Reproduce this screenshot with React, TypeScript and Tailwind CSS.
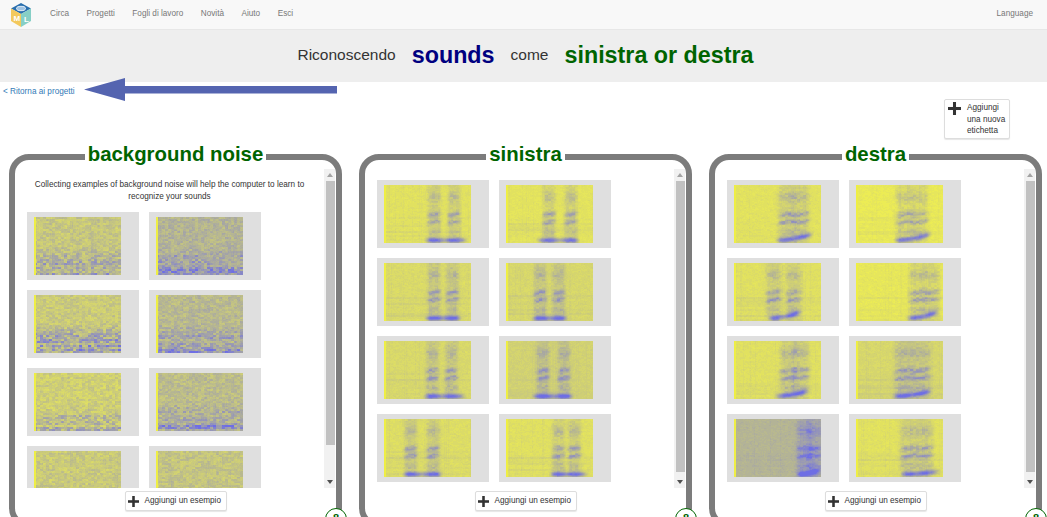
import { useMemo } from 'react';

interface Spec {
    seed: number;
    base: number;
    low?: number;
    cols?: [number, number];
    width?: number;
    start?: number;
    end?: number;
    rise?: number;
}

const noiseSpecs: Spec[] = [
    { seed: 3, base: 0.28, low: 0.34 },
    { seed: 7, base: 0.42, low: 0.34 },
    { seed: 11, base: 0.26, low: 0.5 },
    { seed: 17, base: 0.38, low: 0.38 },
    { seed: 23, base: 0.22, low: 0.3 },
    { seed: 29, base: 0.36, low: 0.48 },
    { seed: 31, base: 0.26, low: 0.05 },
    { seed: 37, base: 0.3, low: 0.05 },
];

const sinistraSpecs: Spec[] = [
    { seed: 41, base: 0.09, cols: [0.57, 0.8], start: 0.45, end: 0.97 },
    { seed: 43, base: 0.07, cols: [0.49, 0.74], start: 0.33, end: 0.85 },
    { seed: 47, base: 0.14, cols: [0.57, 0.78], start: 0.45, end: 0.9 },
    { seed: 53, base: 0.16, cols: [0.39, 0.6], start: 0.28, end: 0.72 },
    { seed: 59, base: 0.15, cols: [0.55, 0.77], start: 0.44, end: 0.95 },
    { seed: 61, base: 0.2, cols: [0.42, 0.66], start: 0.28, end: 0.78 },
    { seed: 67, base: 0.12, cols: [0.3, 0.56], start: 0.2, end: 0.68 },
    { seed: 71, base: 0.1, cols: [0.6, 0.78], start: 0.48, end: 0.95 },
];

const destraSpecs: Spec[] = [
    { seed: 73, base: 0.08, cols: [0.6, 0.76], width: 0.1, start: 0.46, end: 0.92, rise: 0.12 },
    { seed: 79, base: 0.02, cols: [0.55, 0.72], width: 0.1, start: 0.42, end: 0.88, rise: 0.12 },
    { seed: 83, base: 0.1, cols: [0.45, 0.68], width: 0.09, start: 0.38, end: 0.78, rise: 0.12 },
    { seed: 89, base: 0.04, cols: [0.7, 0.86], width: 0.1, start: 0.56, end: 0.95, rise: 0.12 },
    { seed: 97, base: 0.1, cols: [0.62, 0.76], width: 0.1, start: 0.44, end: 0.86, rise: 0.1 },
    { seed: 101, base: 0.16, cols: [0.55, 0.74], width: 0.11, start: 0.4, end: 0.88, rise: 0.1 },
    { seed: 103, base: 0.42, cols: [0.8, 0.92], width: 0.09, start: 0.7, end: 1, rise: 0.08 },
    { seed: 107, base: 0.09, cols: [0.6, 0.78], width: 0.1, start: 0.5, end: 0.98, rise: 0.06 },
];

function rng(seed: number) {
    let s = (seed * 2654435761) >>> 0;
    return () => {
        s = (s ^ (s << 13)) >>> 0;
        s = (s ^ (s >>> 17)) >>> 0;
        s = (s ^ (s << 5)) >>> 0;
        return s / 4294967296;
    };
}

const LEVELS = 24;

function colour(level: number) {
    const c = level / (LEVELS - 1);
    const yellow = [236, 236, 84];
    const grey = [170, 170, 160];
    const blue = [110, 110, 228];
    const [a, b, t] = c < 0.5 ? [yellow, grey, c * 2] : [grey, blue, (c - 0.5) * 2];
    return `rgb(${a.map((x, i) => Math.round(x + (b[i] - x) * t)).join(',')})`;
}

const bump = (d: number, w: number) => Math.exp(-(d * d) / (w * w));
const plateau = (d: number, w: number) => Math.exp(-Math.pow(d / w, 4));
const ramp = (x: number, a: number, b: number) => Math.max(0, Math.min(1, (x - a) / (b - a)));

function sample(spec: Spec) {
    const rand = rng(spec.seed);
    const coarse = Array.from({ length: 30 * 30 }, () => rand());
    const rows = Array.from({ length: 30 }, () => rand());
    const lines = Array.from({ length: 88 }, () => (rand() < 0.1 ? 1 : 0));
    const values: number[][] = [];

    for (let y = 0; y < 58; y++) {
        const row: number[] = [];
        for (let x = 0; x < 87; x++) {
            const fx = x / 87;
            const fy = y / 58;
            const patch = coarse[Math.floor(y / 2) * 30 + Math.floor(x / 3)];
            const streak = rows[Math.floor(y / 2)];
            let v = spec.base + lines[x] * 0.03;

            if (!spec.cols) {
                v += (patch - 0.5) * 0.2 + (rand() - 0.5) * 0.08;
                if (spec.low) {
                    v += spec.low * ramp(fy, 0.48, 0.85) * (0.25 + streak) * (0.2 + patch);
                }
            } else {
                v += (patch - 0.5) * 0.05 + (rand() - 0.5) * 0.05;
                if (fy > 0.55) v += 0.1 * Math.pow(streak, 3) * (1 - fx * 0.5);
                const w = spec.width ?? 0.075;
                for (const col of spec.cols) {
                    const tilt = (fx - col) * 0.25;
                    const g = plateau(fx - col, w);
                    const bands =
                        0.13 +
                        0.14 * bump(fy - 0.2, 0.08) +
                        0.32 * bump(fy - 0.5 + tilt, 0.045) +
                        0.34 * bump(fy - 0.63 + tilt, 0.04) +
                        0.12 * bump(fy - 0.8, 0.06);
                    v += g * bands * (0.75 + patch * 0.5);
                }
                const { start = 0, end = 1, rise = 0 } = spec;
                if (fx > start && fx < end) {
                    const t = (fx - start) / (end - start);
                    const line = 0.945 - rise * t * t;
                    const edge = Math.min(1, Math.min(fx - start, end - fx) * 14);
                    const near = Math.max(bump(fx - spec.cols[0], 0.13), bump(fx - spec.cols[1], 0.13));
                    v += (0.2 + 0.55 * near) * edge * bump(fy - line, 0.045);
                }
            }
            row.push(Math.max(0, Math.min(LEVELS - 1, Math.round(v * (LEVELS - 1)))));
        }
        values.push(row);
    }
    return values;
}

function Spectrogram({ spec }: { spec: Spec }) {
    const paths = useMemo(() => {
        const byLevel: string[] = Array(LEVELS).fill('');
        sample(spec).forEach((row, y) =>
            row.forEach((level, x) => {
                byLevel[level] += `M${x} ${y}h1.1v1.1h-1.1z`;
            }),
        );
        return byLevel;
    }, [spec]);

    return (
        <div className="flex h-[68px] w-[112px] shrink-0 items-center bg-[#dfdfdf] pl-[7px]">
            <svg width="87" height="58" viewBox="0 0 87 58">
                <g filter="url(#soft)">
                    {paths.map((d, i) => (d ? <path key={i} d={d} fill={colour(i)} /> : null))}
                </g>
                <rect width="2" height="58" fill="#eeee44" />
            </svg>
        </div>
    );
}

function PlusGlyph({ size }: { size: number }) {
    return (
        <svg width={size} height={size} viewBox="0 0 12 12" className="shrink-0 fill-[#333]">
            <rect x="4.6" width="2.8" height="12" />
            <rect y="4.6" width="12" height="2.8" />
        </svg>
    );
}

function Scrollbar({ thumb }: { thumb: number }) {
    return (
        <div className="flex h-full w-[11px] shrink-0 flex-col bg-[#f1f1f1]">
            <div className="flex h-[12px] items-center justify-center">
                <div className="h-0 w-0 border-x-[3px] border-b-[4px] border-x-transparent border-b-[#a3a3a3]" />
            </div>
            <div className="ml-[2px] w-[8.5px] bg-[#c1c1c1]" style={{ height: thumb }} />
            <div className="flex-1" />
            <div className="flex h-[12px] items-center justify-center">
                <div className="h-0 w-0 border-x-[3px] border-t-[4px] border-x-transparent border-t-[#505050]" />
            </div>
        </div>
    );
}

function Panel({ title, specs, intro, thumb }: { title: string; specs: Spec[]; intro?: boolean; thumb: number }) {
    return (
        <div className="relative h-[374px] w-[333px] shrink-0 rounded-[20px] border-[6px] border-[#7c7c7c] bg-white">
            <div className="absolute inset-x-0 -top-[19px] flex justify-center">
                <span className="bg-white px-[3px] text-[20.4px] font-bold leading-[26px] text-[#006400]">{title}</span>
            </div>
            <div className="box-content flex h-[319px] pt-[9px] pr-[1px]">
                <div className="min-w-0 flex-1 overflow-hidden">
                    {intro ? (
                        <p className="mx-auto mb-[9px] w-[275px] pt-[10px] text-center text-[8.2px] leading-[12px] text-[#333]">
                            Collecting examples of background noise will help the computer to learn to recognize your sounds
                        </p>
                    ) : (
                        <div className="h-[11px]" />
                    )}
                    <div className="ml-[12px] grid grid-cols-[112px_112px] gap-x-[9.5px] gap-y-[10px]">
                        {specs.map((s) => (
                            <Spectrogram key={s.seed} spec={s} />
                        ))}
                    </div>
                </div>
                <Scrollbar thumb={thumb} />
            </div>
            <div className="mt-[3px] flex justify-center">
                <button className="flex h-[20px] w-[102px] items-center gap-[6px] rounded-[2px] border border-[#ddd] bg-white pl-[2px] text-[8.2px] text-[#333] shadow-[0_1px_1px_rgba(0,0,0,0.1)]">
                    <PlusGlyph size={11} />
                    Aggiungi un esempio
                </button>
            </div>
            <div className="absolute -right-[11px] top-[348px] flex h-[22px] w-[22px] justify-center rounded-full border border-[#006400] bg-white text-[11px] font-bold leading-[18px] text-[#006400]">
                8
            </div>
        </div>
    );
}

export default function App() {
    return (
        <div className="relative h-[517px] w-[1047px] overflow-hidden bg-white font-['Liberation_Sans',sans-serif]">
            <svg width="0" height="0" className="absolute">
                <filter id="soft" x="0" y="0" width="100%" height="100%">
                    <feGaussianBlur stdDeviation="0.6" />
                </filter>
            </svg>

            <nav className="flex h-[30px] items-center border-b border-[#e7e7e7] bg-[#f8f8f8] text-[8.2px] text-[#777]">
                <svg width="22" height="24" viewBox="0 0 22 24" className="ml-[10px] mr-[18px]">
                    <polygon points="11,0 21,5.5 11,11 1,5.5" fill="#2a6fae" />
                    <polygon points="1,5.5 11,11 11,24 1,18" fill="#f3c95d" />
                    <polygon points="21,5.5 11,11 11,24 21,18" fill="#86cfc6" />
                    <ellipse cx="11" cy="5.5" rx="4.5" ry="2.2" fill="#9fc3e3" stroke="#fff" strokeWidth="0.8" />
                    <text x="3.5" y="18" fontSize="8" fill="#fff" fontWeight="bold">M</text>
                    <text x="14" y="19" fontSize="8" fill="#fff" fontWeight="bold">L</text>
                </svg>
                <div className="flex gap-[17.5px]">
                    <span>Circa</span>
                    <span>Progetti</span>
                    <span>Fogli di lavoro</span>
                    <span>Novità</span>
                    <span>Aiuto</span>
                    <span>Esci</span>
                </div>
                <span className="ml-auto mr-[14px]">Language</span>
            </nav>

            <div className="flex h-[52px] items-center justify-center bg-[#eee] pb-[2px] pl-[4px] text-[#333]">
                <span className="text-[15.5px]">Riconoscendo</span>
                <span className="ml-[16px] text-[23.3px] font-bold text-[#000080]">sounds</span>
                <span className="ml-[16px] text-[15.5px]">come</span>
                <span className="ml-[16px] text-[23.3px] font-bold text-[#006400]">sinistra or destra</span>
            </div>

            <div className="relative h-[17px]">
                <a className="relative -top-[5px] ml-[3px] text-[8.2px] leading-[15px] text-[#337ab7]">&lt; Ritorna ai progetti</a>
                <svg width="254" height="24" viewBox="0 0 254 24" className="absolute left-[84px] -top-[4px]">
                    <polygon points="0,11.5 41,0 41,8 253,8 253,15.5 41,15.5 41,23" fill="#5464b0" />
                </svg>
            </div>

            <div className="flex justify-end pr-[37px]">
                <button className="flex h-[40px] w-[66px] items-start gap-[6px] rounded-[2px] border border-[#ddd] bg-white pl-[3px] pt-[2px] text-left text-[8.2px] leading-[11.6px] text-[#333] shadow-[0_1px_1px_rgba(0,0,0,0.1)]">
                    <PlusGlyph size={13} />
                    <span>Aggiungi una nuova etichetta</span>
                </button>
            </div>

            <div className="mt-[15px] flex gap-[17px] pl-[9px]">
                <Panel title="background noise" specs={noiseSpecs} intro thumb={264} />
                <Panel title="sinistra" specs={sinistraSpecs} thumb={291} />
                <Panel title="destra" specs={destraSpecs} thumb={291} />
            </div>
        </div>
    );
}
